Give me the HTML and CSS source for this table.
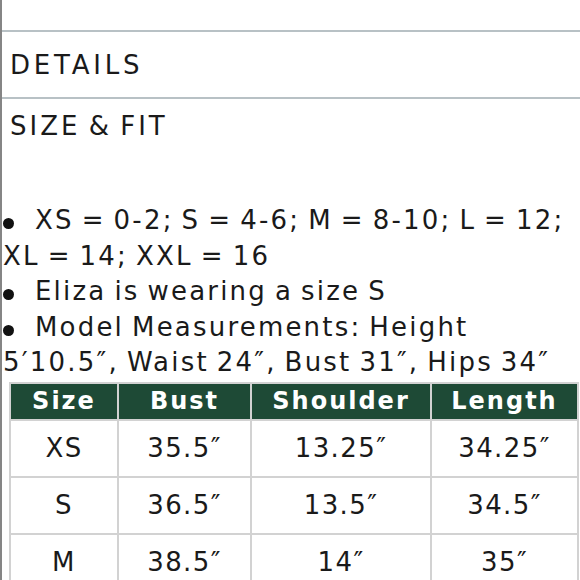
FILE: index.html
```html
<!DOCTYPE html>
<html>
<head>
<meta charset="utf-8">
<link rel="stylesheet" href="styles.css">
</head>
<body>
<div class="page">
  <div class="top"></div>
  <div class="section details">DETAILS</div>
  <div class="section fit">
    <div class="fit-title">SIZE &amp; FIT</div>
    <p class="list"><span class="dot"></span> XS = 0-2; S = 4-6; M = 8-10; L = 12;<br>XL = 14; XXL = 16<br><span class="dot"></span> Eliza is wearing a size S<br><span class="dot"></span> Model Measurements: Height<br>5′10.5″, Waist 24″, Bust 31″, Hips 34″</p>
    <table class="sizes">
      <colgroup><col class="c1"><col class="c2"><col class="c3"><col class="c4"></colgroup>
      <thead>
        <tr><th>Size</th><th>Bust</th><th>Shoulder</th><th>Length</th></tr>
      </thead>
      <tbody>
        <tr><td>XS</td><td>35.5″</td><td>13.25″</td><td>34.25″</td></tr>
        <tr><td>S</td><td>36.5″</td><td>13.5″</td><td>34.5″</td></tr>
        <tr><td>M</td><td>38.5″</td><td>14″</td><td>35″</td></tr>
      </tbody>
    </table>
  </div>
</div>
</body>
</html>
```
FILE: styles.css
```css
html, body {
  margin: 0;
  padding: 0;
  background: #ffffff;
}
body {
  font-family: "DejaVu Sans", "Liberation Sans", sans-serif;
  color: #1a1a1a;
}
.page {
  height: 580px;
  overflow: hidden;
  border-left: 2px solid #858585;
  box-sizing: border-box;
}
.top {
  height: 30px;
}
.section {
  border-top: 2px solid #b8c1c5;
}
.details {
  font-size: 26px;
  line-height: 30px;
  letter-spacing: 3.8px;
  padding: 18px 0 17px 8px;
}
.fit-title {
  font-size: 26px;
  line-height: 30px;
  letter-spacing: 3px;
  word-spacing: -3px;
  padding: 12px 0 0 8px;
}
.list {
  margin: 62px 0 0 0;
  padding-left: 1px;
  font-size: 26px;
  line-height: 35.5px;
  letter-spacing: 2.2px;
  word-spacing: -2.5px;
  white-space: nowrap;
}
.dot {
  display: inline-block;
  width: 11px;
  height: 11px;
  border-radius: 50%;
  background: #111111;
  margin-right: 13px;
  vertical-align: baseline;
}
.sizes {
  margin: 1px 0 0 7px;
  border-collapse: separate;
  border-spacing: 2px;
  background: #d2d2d2;
  table-layout: fixed;
  width: 570px;
}
.c1 { width: 106px; }
.c2 { width: 131px; }
.c3 { width: 178px; }
.c4 { width: 145px; }
.sizes th {
  background: #1e4a36;
  color: #ffffff;
  font-weight: 700;
  font-size: 24px;
  letter-spacing: 2px;
  height: 35px;
  padding: 0;
  text-align: center;
}
.sizes td {
  background: #ffffff;
  height: 55px;
  padding: 0;
  text-align: center;
  font-size: 26px;
  letter-spacing: 1.4px;
}
```
